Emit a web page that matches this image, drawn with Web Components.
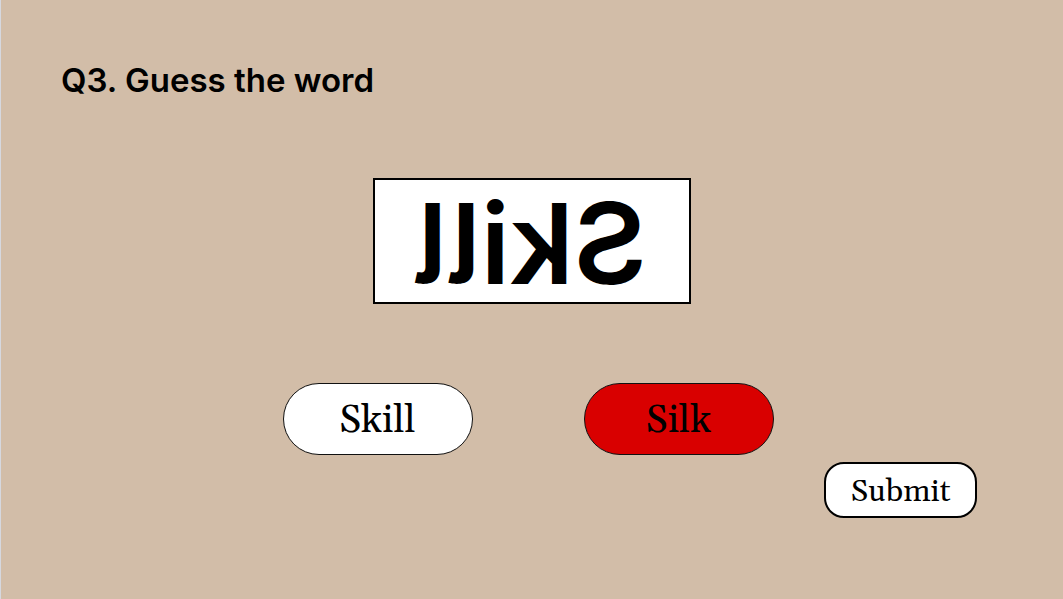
<!DOCTYPE html>
<html lang="en">
<head>
<meta charset="utf-8">
<meta name="viewport" content="width=device-width, initial-scale=1">
<title>Guess the word</title>
<style>
  html { background: #d2bda8; }
  body { margin: 0; }
</style>
</head>
<body>
<quiz-page>
  <quiz-title slot="title">Q3. Guess the word</quiz-title>
  <mirror-word slot="puzzle">Skill</mirror-word>
  <answer-option slot="answers">Skill</answer-option>
  <answer-option slot="answers" selected>Silk</answer-option>
  <submit-button slot="actions">Submit</submit-button>
</quiz-page>
<script>
class BaseElement extends HTMLElement {
  constructor() {
    super();
    this.attachShadow({ mode: "open" }).innerHTML = this.constructor.markup;
  }
}
class QuizPage extends BaseElement {
  static markup = `<style>
    :host { display: block; box-sizing: border-box; min-height: 100vh; border-left: 1px solid #d6d8df; background: #d2bda8; color: #000; }
    header { padding: 60px 60px 0; }
    .puzzle { display: flex; justify-content: center; padding-top: 78px; }
    .answers { display: flex; flex-wrap: wrap; justify-content: center; gap: 16px 111px; padding: 79px 8px 0 0; }
    footer { display: flex; justify-content: flex-end; padding: 7px 86px 40px; }
  </style>
  <header><slot name="title"></slot></header>
  <main>
    <div class="puzzle"><slot name="puzzle"></slot></div>
    <div class="answers"><slot name="answers"></slot></div>
  </main>
  <footer><slot name="actions"></slot></footer>`;
}
class QuizTitle extends BaseElement {
  static markup = `<style>
    :host { display: block; }
    h1 { margin: 0; font: 600 33px/40px Inter, sans-serif; }
  </style><h1><slot></slot></h1>`;
}
class MirrorWord extends BaseElement {
  static markup = `<style>
    :host { display: flex; align-items: center; justify-content: center; box-sizing: border-box; width: 318px; height: 126px; padding: 4px 4px 0 0; border: 2px solid #000; background: #fff; }
    span { display: block; transform: scaleX(-1); font: 600 112px/120px Inter, sans-serif; font-feature-settings: "cv05"; }
  </style><span><slot></slot></span>`;
}
class AnswerOption extends BaseElement {
  static markup = `<style>
    :host { display: block; }
    button { box-sizing: border-box; width: 190px; height: 72px; padding: 4px 0 0; border: 1px solid #111; border-radius: 36px; background: #fff; color: #000; font: 39px/48px Georgia, Gelasio, "Liberation Serif", serif; cursor: pointer; }
    :host([selected]) button { background: #d90000; }
  </style><button type="button"><slot></slot></button>`;
  connectedCallback() {
    this.shadowRoot.querySelector("button").setAttribute("aria-pressed", this.hasAttribute("selected"));
  }
}
class SubmitButton extends BaseElement {
  static markup = `<style>
    :host { display: block; }
    button { box-sizing: border-box; width: 153px; height: 56px; padding: 4px 0 0; border: 2px solid #000; border-radius: 20px; background: #fff; color: #000; font: 31px/40px Georgia, Gelasio, "Liberation Serif", serif; cursor: pointer; }
  </style><button type="button"><slot></slot></button>`;
}
customElements.define("quiz-page", QuizPage);
customElements.define("quiz-title", QuizTitle);
customElements.define("mirror-word", MirrorWord);
customElements.define("answer-option", AnswerOption);
customElements.define("submit-button", SubmitButton);
</script>
</body>
</html>
